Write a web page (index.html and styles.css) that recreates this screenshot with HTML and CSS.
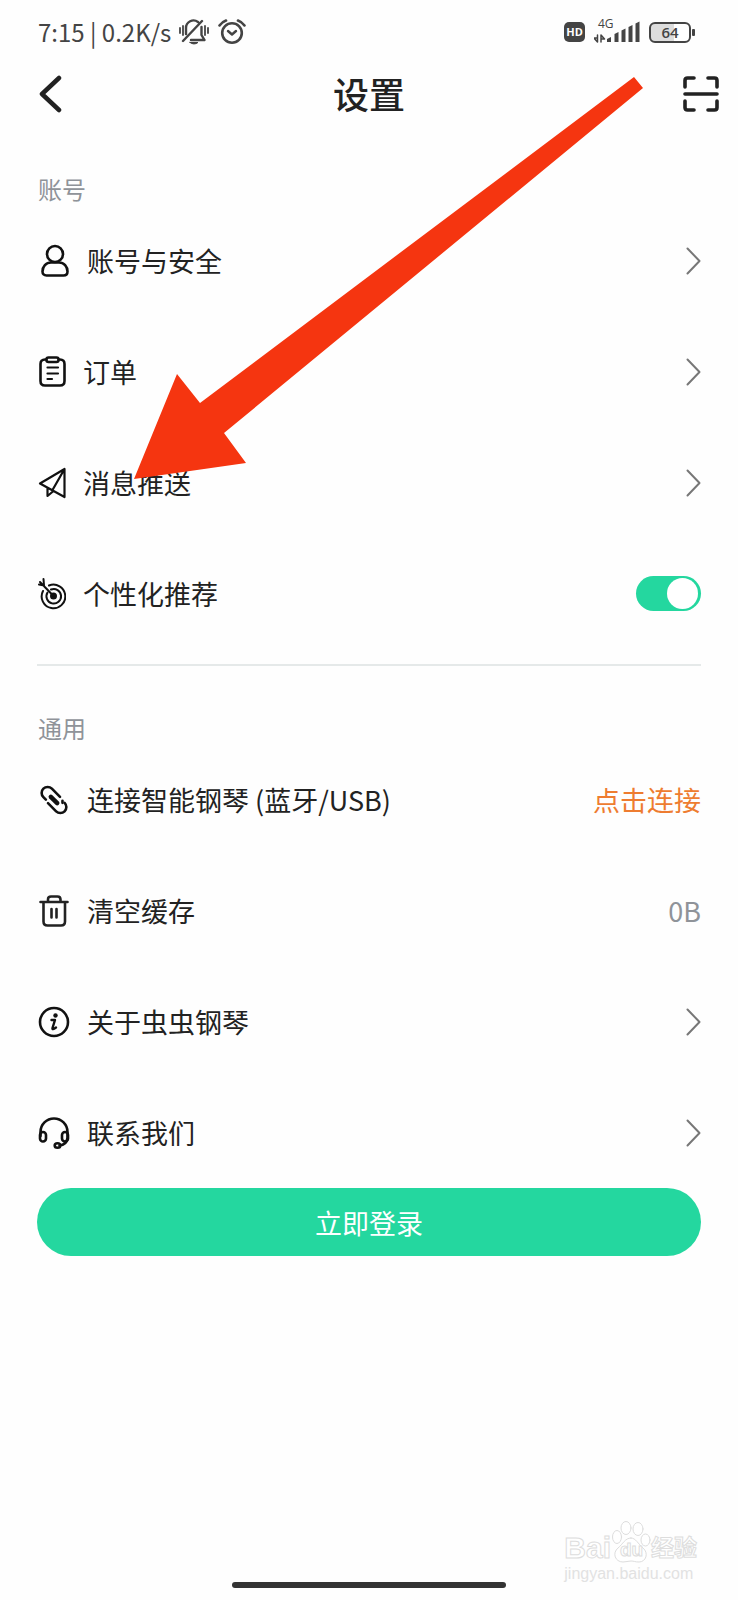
FILE: index.html
```html
<!DOCTYPE html>
<html lang="zh-CN">
<head>
    <meta charset="UTF-8">
    <meta name="viewport" content="width=device-width, initial-scale=1.0">
    <title>设置</title>
    <link rel="stylesheet" href="styles.css">
</head>
<body>
    <div class="page">
        <div class="status-bar">
            <span class="status-text">7:15 | 0.2K/s</span>
            <svg class="bell" width="30" height="26" viewBox="0 0 30 26">
                <path d="M1 9v5M4 7v9M26 7v9M29 9v5" stroke-width="1.8"/>
                <path d="M7 15V9a7.500 7.500 0 0 1 12-6M22.500 8v8l3 5H12M4 22 23 2" stroke-width="2.400"/>
                <path d="M11 23.500h8q-4 3-8 0z" fill="#444"/>
            </svg>
            <svg class="alarm" width="28" height="26" viewBox="0 0 28 26">
                <circle cx="14" cy="14" r="9.800" stroke-width="2.600"/>
                <path d="M10 12l4 3.500 4-3.500" stroke-width="2.400"/>
                <path d="M1.500 6.500Q4 3 8 1.500M26.500 6.500Q24 3 20 1.500" stroke-width="2.600"/>
            </svg>
            <div class="status-right">
                <span class="hd">HD</span>
                <div class="signal">
                    <span class="net">4G</span>
                    <svg width="46" height="22" viewBox="0 0 46 22">
                        <path d="M0 17h3.500M3.500 14v7L0 17M7 21v-7l3.500 4H7" stroke-width="1.500"/>
                        <path d="M13 21v-3l4-2v5zM20.500 21v-8l4-2v10zM27.500 21V9.500l4-2V21zM34.500 21V6l4-2v17zM41.500 21V2.500l4-2V21z" fill="#444" stroke="none"/>
                    </svg>
                </div>
                <div class="battery"><span>64</span></div>
            </div>
        </div>

        <header class="header">
            <button class="icon-btn back" aria-label="返回">
                <svg width="24" height="38" viewBox="0 0 24 38"><path d="M20 3 3 19l17 16" stroke="#222" stroke-width="4.500"/></svg>
            </button>
            <h1>设置</h1>
            <button class="icon-btn scan" aria-label="扫一扫">
                <svg width="36" height="36" viewBox="0 0 36 36"><path d="M2 11V4.500Q2 2 4.500 2h6.500M25 2h6.500Q34 2 34 4.500V11M34 25v6.500q0 2.500-2.500 2.500H25M11 34H4.500Q2 34 2 31.500V25M2 18h32" stroke="#222" stroke-width="3.600"/></svg>
            </button>
        </header>

        <main class="content">
            <h2>账号</h2>
            <a class="row" href="#">
                <svg class="icon" viewBox="0 0 32 34">
                    <circle cx="17" cy="10" r="8"/>
                    <path d="M13 18.500h8c5 0 8.500 4 8.500 9 0 2.500-1.500 4-4 4H8.500c-2.500 0-4-1.500-4-4 0-5 3.500-9 8.500-9z"/>
                </svg>
                <span>账号与安全</span>
                <svg class="chevron" viewBox="0 0 15 28"><path d="M1.500 1.500 13.500 14l-12 12.500"/></svg>
            </a>
            <a class="row" href="#">
                <svg class="icon small" viewBox="0 0 28 34">
                    <path d="M8 4.500H7q-4.500 0-4.500 4.500v17q0 4.500 4.500 4.500h15q4.500 0 4.500-4.500V9q0-4.500-4.500-4.500h-1"/>
                    <rect x="8.500" y="2.500" width="12" height="4.500" rx="2"/>
                    <path d="M9.500 12.500h10.500M9.500 18.500h10.500M9.500 24h4.500" stroke-width="2.200"/>
                </svg>
                <span>订单</span>
                <svg class="chevron" viewBox="0 0 15 28"><path d="M1.500 1.500 13.500 14l-12 12.500"/></svg>
            </a>
            <a class="row" href="#">
                <svg class="icon small" viewBox="0 0 28 34">
                    <path d="M26.500 3 2 17.500l24.500 13.500zM26.500 3 14.500 24M9.500 22v8l6-5" stroke-width="2.200"/>
                </svg>
                <span>消息推送</span>
                <svg class="chevron" viewBox="0 0 15 28"><path d="M1.500 1.500 13.500 14l-12 12.500"/></svg>
            </a>
            <label class="row">
                <svg class="icon small" viewBox="0 0 28 34">
                    <path d="M5 14A11.800 11.800 0 1 0 11 8.500" stroke-width="2"/>
                    <path d="M9.500 15.500a7.300 7.300 0 1 0 3.500-3" stroke-width="2"/>
                    <circle cx="15.500" cy="19" r="2.200" fill="#111"/>
                    <path d="M15.500 19 2 5M1 7.500l5 1L5.500 2" stroke-width="2"/>
                </svg>
                <span>个性化推荐</span>
                <input class="switch" type="checkbox" checked>
            </label>

            <hr>

            <h2>通用</h2>
            <div class="row">
                <svg class="icon" viewBox="0 0 32 34">
                    <g transform="translate(16 17) rotate(45)">
                        <path d="M2-6.500H-9.500a6 6 0 0 0 0 12H-6M6.500-5.500l1.500 1.500"/>
                        <path d="M-2 6.500H9.500a6 6 0 0 0 0-12M-6.500 5.500"/>
                        <path d="M-4.500 0h9" stroke-width="4.500"/>
                    </g>
                </svg>
                <span>连接智能钢琴 (蓝牙/USB)</span>
                <button class="connect">点击连接</button>
            </div>
            <a class="row" href="#">
                <svg class="icon" viewBox="0 0 32 34">
                    <path d="M2.500 8h27M10 8V5.500q0-3 3-3h6.500q3 0 3 3V8M5.500 8v19.500q0 4 4 4h13.500q4 0 4-4V8M13.500 15v8.500M18.500 15v8.500" stroke="#222" stroke-width="2.600"/>
                </svg>
                <span>清空缓存</span>
                <span class="value">0B</span>
            </a>
            <a class="row" href="#">
                <svg class="icon" viewBox="0 0 32 34">
                    <circle cx="16" cy="17" r="14"/>
                    <circle cx="17.500" cy="10.500" r="2.200" fill="#111" stroke="none"/>
                    <path d="M13.500 15h3.500l-2.500 8q-.5 2.500 3.500-.5" stroke-width="2.400"/>
                </svg>
                <span>关于虫虫钢琴</span>
                <svg class="chevron" viewBox="0 0 15 28"><path d="M1.500 1.500 13.500 14l-12 12.500"/></svg>
            </a>
            <a class="row" href="#">
                <svg class="icon" viewBox="0 0 32 34">
                    <path d="M2.500 20v-4a13.500 13.500 0 0 1 27 0v6q-1 7-8 7.500"/>
                    <rect x="2" y="16" width="6" height="9.500" rx="3"/>
                    <rect x="24" y="16" width="6" height="9.500" rx="3"/>
                    <ellipse cx="19.500" cy="29.500" rx="2.800" ry="2.300"/>
                </svg>
                <span>联系我们</span>
                <svg class="chevron" viewBox="0 0 15 28"><path d="M1.500 1.500 13.500 14l-12 12.500"/></svg>
            </a>

            <button class="login">立即登录</button>
        </main>

        <div class="home-bar"></div>

        <!-- pointer to the push settings row -->
        <svg class="arrow" width="510" height="404" viewBox="0 0 510 404">
            <path d="M0 403 43 298 66 327 500 1 509 12 90 357 112 387z"/>
        </svg>

        <div class="watermark">
            <div class="brand">
                <span>Bai</span>
                <span class="paw">
                    <svg width="40" height="44" viewBox="0 0 40 44">
                        <ellipse cx="6" cy="17" rx="4.500" ry="6.500"/>
                        <ellipse cx="15" cy="8" rx="5" ry="6.500"/>
                        <ellipse cx="27" cy="9" rx="5" ry="6.500"/>
                        <ellipse cx="34.500" cy="20" rx="4.500" ry="6"/>
                        <path d="M20 18c5 0 7 6 12 10 6 5 3 14-4 14-4 0-5-1-8-1s-5 1-8 1c-8 0-11-9-5-14 5-4 7-10 13-10z"/>
                    </svg>
                    <span class="du">du</span>
                </span>
                <span class="cn">经验</span>
            </div>
            <div class="site">jingyan.baidu.com</div>
        </div>
    </div>
</body>
</html>
```
FILE: styles.css
```css
* {
    box-sizing: border-box;
}
body {
    margin: 0;
    background: #fefefe;
    color: #222;
    font-family: "Noto Sans CJK SC", sans-serif;
}
button {
    padding: 0;
    border: none;
    background: none;
    font-family: inherit;
    cursor: pointer;
}
svg {
    display: block;
    flex-shrink: 0;
    fill: none;
    stroke-linecap: round;
    stroke-linejoin: round;
}
.page {
    position: relative;
    display: flex;
    flex-direction: column;
    min-height: 100vh;
}

/* status bar */
.status-bar {
    display: flex;
    align-items: center;
    height: 64px;
    padding: 0 43px 0 38px;
    color: #444;
}
.status-bar svg {
    stroke: #444;
}
.status-text {
    font-size: 24px;
    line-height: 32px;
    white-space: nowrap;
}
.bell {
    margin-left: 8px;
}
.alarm {
    margin-left: 9px;
}
.status-right {
    display: flex;
    align-items: center;
    gap: 9px;
    margin-left: auto;
}
.hd {
    width: 21px;
    border-radius: 5px;
    background: #444;
    color: white;
    font: bold 11px/20px "Open Sans", sans-serif;
    text-align: center;
}
.signal {
    position: relative;
}
.net {
    position: absolute;
    top: -4px;
    left: 4px;
    font: 12px/14px "Open Sans", sans-serif;
}
.battery {
    position: relative;
    width: 42px;
    margin-right: 4px;
    border: 2px solid #444;
    border-radius: 6px;
    background: linear-gradient(to right, #ddd 60%, white 60%);
    font: 600 15px/17px "Open Sans", sans-serif;
    text-align: center;
}
.battery::after {
    content: "";
    position: absolute;
    top: 5px;
    right: -6px;
    width: 3px;
    height: 7px;
    border-radius: 1px;
    background: #444;
}

/* title bar */
.header {
    display: grid;
    grid-template-columns: 1fr auto 1fr;
    align-items: center;
    height: 60px;
    padding: 0 19px;
}
.header h1 {
    margin: 0;
    padding-bottom: 2px;
    font-size: 36px;
    font-weight: 500;
    line-height: 48px;
}
.back {
    justify-self: start;
    margin-left: 20px;
}
.scan {
    justify-self: end;
}

/* settings list */
.content {
    padding: 49px 37px 0;
}
.content h2 {
    margin: 0;
    padding-left: 1px;
    color: #8f9399;
    font-size: 24px;
    font-weight: 400;
    line-height: 32px;
}
.row {
    display: flex;
    align-items: center;
    gap: 17px;
    height: 111px;
    padding-left: 1px;
    color: #222;
    font-size: 27px;
    line-height: 36px;
    text-decoration: none;
}
.icon {
    width: 32px;
    height: 34px;
    stroke: #111;
    stroke-width: 2.6px;
}
.icon.small {
    width: 28px;
}
.chevron {
    width: 15px;
    height: 28px;
    margin-left: auto;
    stroke: #777;
    stroke-width: 2px;
}
.switch {
    appearance: none;
    width: 65px;
    height: 35px;
    margin: 0 0 0 auto;
    padding: 2px 3px;
    border-radius: 18px;
    background: #ccc;
}
.switch::before {
    content: "";
    display: block;
    width: 31px;
    height: 31px;
    border-radius: 50%;
    background: white;
}
.switch:checked {
    background: #24d79f;
}
.switch:checked::before {
    margin-left: auto;
}
.content hr {
    height: 2px;
    margin: 15px 0 46px;
    border: none;
    background: #e5e9e9;
}
.connect {
    margin-left: auto;
    color: #ee7c30;
    font-size: 27px;
    line-height: 36px;
}
.value {
    margin-left: auto;
    color: #8f9399;
}
.login {
    display: block;
    width: 100%;
    height: 68px;
    border-radius: 34px;
    background: #24d79f;
    color: white;
    font-size: 27px;
}
.home-bar {
    width: 37%;
    height: 6px;
    margin: auto auto 12px;
    border-radius: 3px;
    background: #333;
}

/* overlays */
.arrow {
    position: absolute;
    top: 76px;
    left: 134px;
    fill: #f53510;
    pointer-events: none;
}
.watermark {
    position: absolute;
    right: 41px;
    bottom: 16px;
    color: white;
    font-family: "Liberation Sans", "Noto Sans CJK SC", sans-serif;
    -webkit-text-stroke: 1px #ddd;
}
.brand {
    display: flex;
    align-items: flex-end;
    font-size: 30px;
    font-weight: bold;
    line-height: 32px;
}
.paw {
    position: relative;
}
.paw svg {
    fill: white;
    stroke: #ddd;
}
.du {
    position: absolute;
    bottom: -2px;
    left: 9px;
    font-size: 19px;
}
.cn {
    font-size: 23px;
}
.site {
    color: #e2e2e2;
    font-size: 16px;
    line-height: 20px;
    -webkit-text-stroke: 0;
}
```
